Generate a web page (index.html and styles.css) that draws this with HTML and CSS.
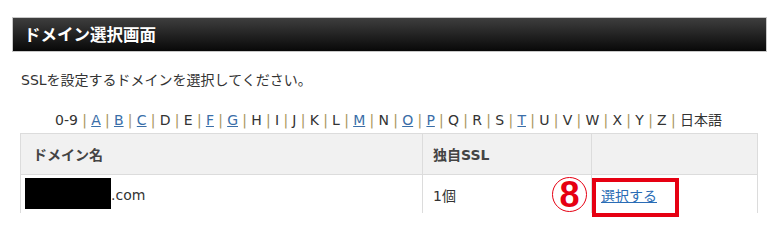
FILE: index.html
```html
<!DOCTYPE html>
<html lang="ja">
<head>
    <meta charset="UTF-8">
    <title>ドメイン選択画面</title>
    <link rel="stylesheet" href="styles.css">
</head>
<body>

    <div class="page">
        <h1 class="title-bar">ドメイン選択画面</h1>

        <div class="content">
            <p class="lead">SSLを設定するドメインを選択してください。</p>

            <p class="index">
                <span>0-9</span><i>|</i><a href="#">A</a><i>|</i><a href="#">B</a><i>|</i><a href="#">C</a><i>|</i><span>D</span><i>|</i><span>E</span><i>|</i><a href="#">F</a><i>|</i><a href="#">G</a><i>|</i><span>H</span><i>|</i><span>I</span><i>|</i><span>J</span><i>|</i><span>K</span><i>|</i><span>L</span><i>|</i><a href="#">M</a><i>|</i><span>N</span><i>|</i><a href="#">O</a><i>|</i><a href="#">P</a><i>|</i><span>Q</span><i>|</i><span>R</span><i>|</i><span>S</span><i>|</i><a href="#">T</a><i>|</i><span>U</span><i>|</i><span>V</span><i>|</i><span>W</span><i>|</i><span>X</span><i>|</i><span>Y</span><i>|</i><span>Z</span><i>|</i><span>日本語</span>
            </p>

            <div class="table-wrap">
                <table class="domain-table">
                    <colgroup>
                        <col class="col-name">
                        <col class="col-ssl">
                        <col class="col-action">
                    </colgroup>
                    <tr>
                        <th>ドメイン名</th>
                        <th>独自SSL</th>
                        <th></th>
                    </tr>
                    <tr>
                        <td class="cell-name"><span class="masked"></span>.com</td>
                        <td class="cell-ssl">1個</td>
                        <td class="cell-action"><a href="#" class="select-link">選択する</a></td>
                    </tr>
                </table>

                <!-- 注釈 -->
                <span class="step-mark">8</span>
                <span class="highlight-box"></span>
            </div>
        </div>
    </div>

</body>
</html>
```

FILE: styles.css
```css
body {
    margin: 0;
    padding: 0;
    background-color: #ffffff;
    font-family: "DejaVu Sans", Verdana, "Noto Sans CJK JP", sans-serif;
    font-size: 14px;
    color: #333;
}
.page {
    padding-top: 17px;
    min-height: 244px;
    box-sizing: border-box;
}
.title-bar {
    margin: 0 12px;
    height: 33px;
    padding: 0 11px;
    border: 1px solid #c8c8c8;
    background: linear-gradient(#3e3e3e, #080808);
    color: #fff;
    font-size: 16.5px;
    font-weight: bold;
    line-height: 33px;
    font-family: "Noto Sans CJK JP", sans-serif;
}
.content {
    padding: 0 22px 31px 20px;
}
.lead {
    margin: 18px 0 0 1px;
    line-height: 20px;
}
.index {
    margin: 20px 0 0 0;
    line-height: 20px;
    text-align: center;
}
.index i {
    font-style: normal;
    color: #a8955e;
    margin: 0 4.25px;
}
.index a {
    color: #3a6ea8;
    text-decoration: underline;
}
.table-wrap {
    position: relative;
    margin-top: 3px;
}
.domain-table {
    width: 737px;
    border-collapse: collapse;
    table-layout: fixed;
}
.col-name {
    width: 402px;
}
.col-ssl {
    width: 169px;
}
.col-action {
    width: 166px;
}
.domain-table th,
.domain-table td {
    border-left: 1px solid #dcdcdc;
    border-right: 1px solid #dcdcdc;
    text-align: left;
    padding: 0;
}
.domain-table th {
    height: 40px;
    padding-left: 12px;
    background-color: #f1f1f1;
    border-top: 1px solid #dcdcdc;
    border-bottom: 1px solid #dcdcdc;
    font-weight: bold;
    color: #444;
}
.domain-table th:nth-child(2) {
    padding-left: 10px;
}
.domain-table td {
    height: 38px;
    padding-top: 3px;
    box-sizing: border-box;
    vertical-align: middle;
}
.domain-table td.cell-name {
    padding-left: 4px;
}
.domain-table td.cell-ssl {
    padding-left: 10px;
}
.domain-table td.cell-action {
    padding-left: 9px;
}
.masked {
    display: inline-block;
    width: 86px;
    height: 31px;
    margin-top: -4px;
    vertical-align: middle;
    background-color: #000;
}
.select-link {
    color: #2a6cb5;
    text-decoration: underline;
}
.step-mark {
    position: absolute;
    left: 532px;
    top: 44px;
    width: 35px;
    height: 35px;
    box-sizing: border-box;
    border: 1.5px solid #e60012;
    border-radius: 50%;
    background-color: #fff;
    color: #e60012;
    font-family: "Liberation Sans", Arial, sans-serif;
    font-weight: bold;
    font-size: 36px;
    line-height: 33px;
    text-align: center;
}
.highlight-box {
    position: absolute;
    left: 572px;
    top: 45px;
    width: 79px;
    height: 31px;
    border: 4px solid #e60012;
}
```
